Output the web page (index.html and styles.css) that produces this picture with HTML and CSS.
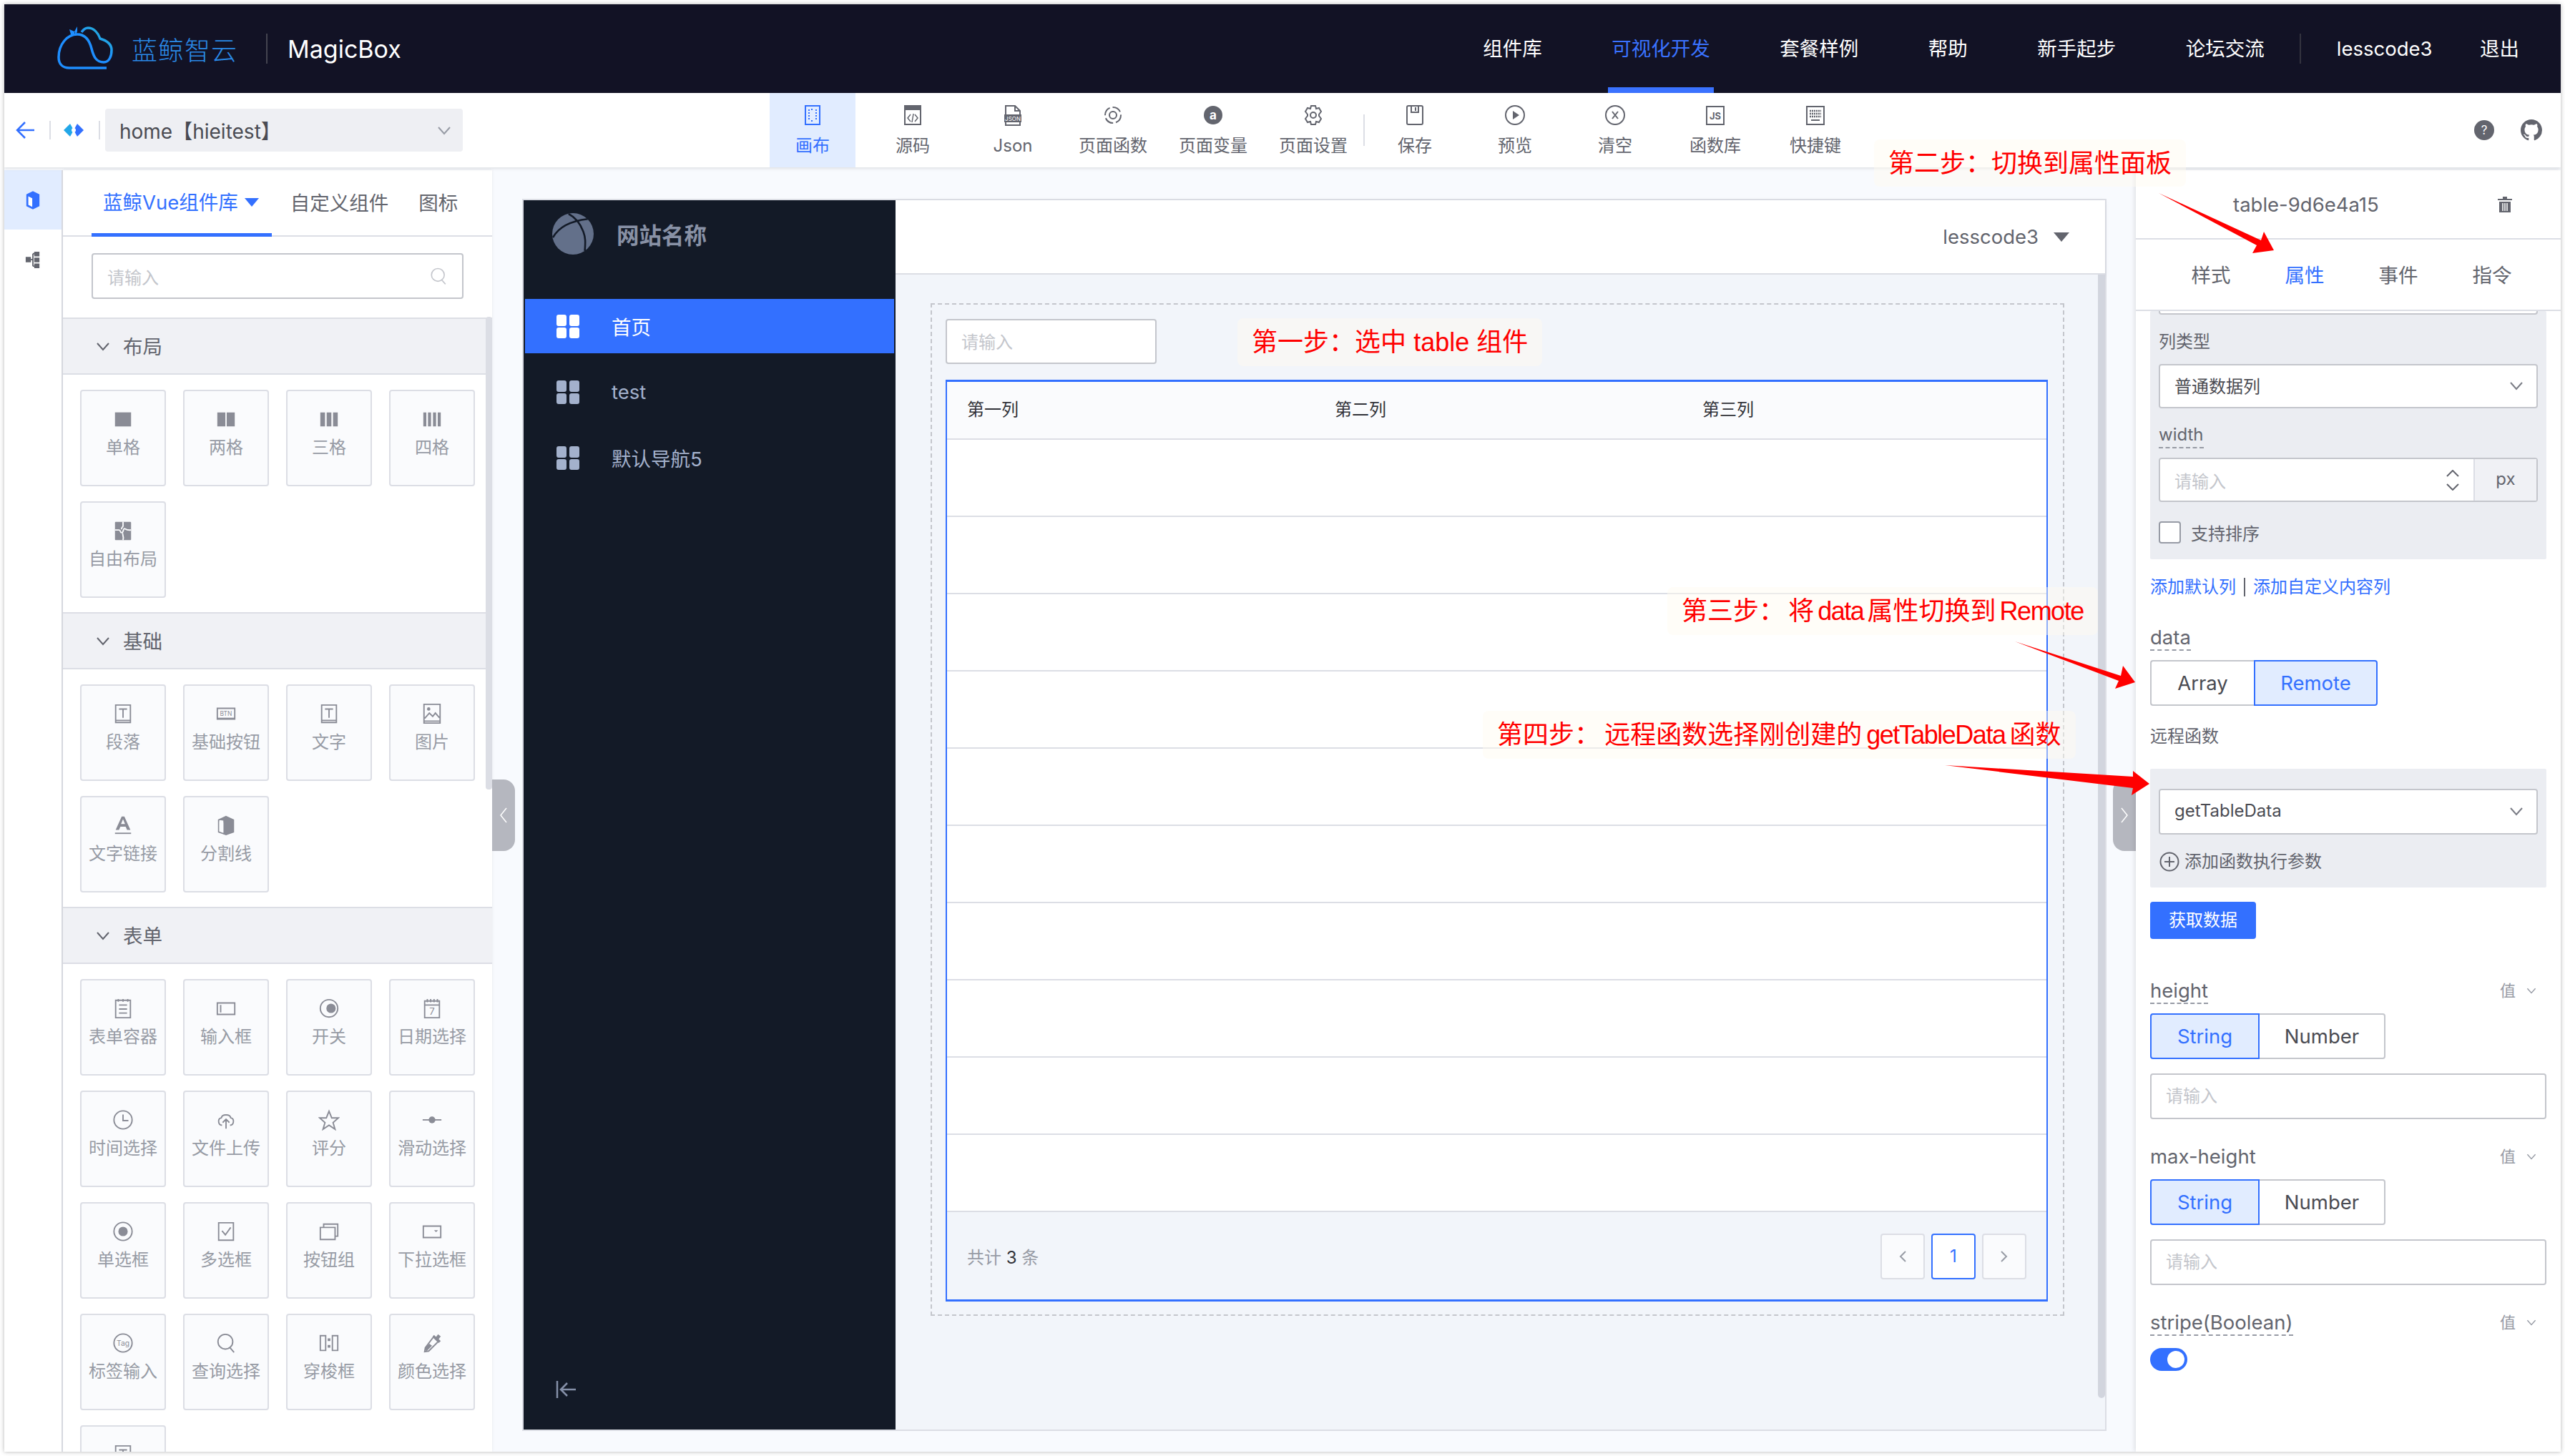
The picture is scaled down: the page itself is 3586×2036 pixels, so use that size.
FILE: index.html
```html
<!DOCTYPE html>
<html lang="zh-CN">
<head>
    <meta charset="UTF-8">
    <title>MagicBox</title>
    <link rel="stylesheet" href="styles.css">
</head>
<body>

<!-- shared icons -->
<svg class="icon-defs" xmlns="http://www.w3.org/2000/svg">
    <symbol id="i-down" viewBox="0 0 20 20"><path d="M2 6l8 9 8-9" fill="none" stroke="currentColor" stroke-width="2"/></symbol>
    <symbol id="i-one" viewBox="0 0 32 32"><rect x="4" y="6" width="24" height="21" fill="currentColor"/></symbol>
    <symbol id="i-two" viewBox="0 0 32 32"><path d="M3 6h12v21H3zM17 6h12v21H17z" fill="currentColor"/></symbol>
    <symbol id="i-three" viewBox="0 0 32 32"><path d="M3 6h7v21H3zM12.500 6h7v21h-7zM22 6h7v21h-7z" fill="currentColor"/></symbol>
    <symbol id="i-four" viewBox="0 0 32 32"><path d="M3 6h4.500v21H3zM10 6h4.500v21H10zM17.500 6H22v21h-4.500zM24.500 6H29v21h-4.500z" fill="currentColor"/></symbol>
    <symbol id="i-puzzle" viewBox="0 0 32 32"><rect x="4" y="3" width="24" height="27" rx="1" fill="currentColor"/><path d="M4 15h6c3 0 1 4 4 4s2-6 4-6 2 3 10 2M16 3v6c0 2-3 2-2 5M16 20c-2 2 2 4 0 10" fill="none" stroke="#fafbfd" stroke-width="2"/></symbol>
    <symbol id="i-para" viewBox="0 0 32 32"><path d="M5 3h22v26H5zM5 26h22M10 9h12M16 9v13" fill="none" stroke="currentColor" stroke-width="2"/></symbol>
    <symbol id="i-btn" viewBox="0 0 32 32"><path d="M3 8h26v16H3z" fill="none" stroke="currentColor" stroke-width="2"/><path d="M3 23h26" stroke="currentColor" stroke-width="2"/><text x="16" y="19" text-anchor="middle" font-size="9" fill="currentColor">BTN</text></symbol>
    <symbol id="i-pic" viewBox="0 0 32 32"><path d="M4 2h24v28H4zM4 27h24M5 23l7-8 5 5 4-5 6 7" fill="none" stroke="currentColor" stroke-width="2"/><circle cx="11" cy="9" r="2.500" fill="currentColor"/></symbol>
    <symbol id="i-link" viewBox="0 0 32 32"><path d="M5 23L14 3h4l9 20h-5l-2-5h-8l-2 5zM13 14h6l-3-7z" fill="currentColor" fill-rule="evenodd"/><path d="M4 28h24" stroke="currentColor" stroke-width="2"/></symbol>
    <symbol id="i-cube" viewBox="0 0 32 32"><path d="M16 3l11 5v18l-11 4-11-4V8z" fill="none" stroke="currentColor" stroke-width="2"/><path d="M16 3l11 5v18l-11 4-4-1V9l-7-1z" fill="currentColor"/><path d="M6 10l6 2v15l-6-2z" fill="#fafbfd"/></symbol>
    <symbol id="i-form" viewBox="0 0 32 32"><path d="M5 4h22v26H5zM10 11h12M10 17h12M10 23h12M9 2v4M16 2v4M23 2v4" fill="none" stroke="currentColor" stroke-width="2"/></symbol>
    <symbol id="i-input" viewBox="0 0 32 32"><path d="M3 8h26v17H3zM8 11v11" fill="none" stroke="currentColor" stroke-width="2"/></symbol>
    <symbol id="i-switch" viewBox="0 0 32 32"><circle cx="16" cy="16" r="13" fill="none" stroke="currentColor" stroke-width="2"/><circle cx="19" cy="16" r="7" fill="currentColor"/></symbol>
    <symbol id="i-date" viewBox="0 0 32 32"><path d="M5 5h22v25H5zM5 11h22M9 2v5M14 2v5M19 2v5M24 2v5" fill="none" stroke="currentColor" stroke-width="2"/><text x="16" y="26" text-anchor="middle" font-size="14" fill="currentColor">7</text></symbol>
    <symbol id="i-clock" viewBox="0 0 32 32"><circle cx="16" cy="16" r="13.500" fill="none" stroke="currentColor" stroke-width="2"/><path d="M16 8v9h8" fill="none" stroke="currentColor" stroke-width="2"/></symbol>
    <symbol id="i-upload" viewBox="0 0 32 32"><path d="M10 24C4 24 3 14 9 13c1-6 13-6 14 0 6 1 5 11-1 11M16 29V15M11 20l5-5 5 5" fill="none" stroke="currentColor" stroke-width="2"/></symbol>
    <symbol id="i-star" viewBox="0 0 32 32"><path d="M16 3l4 10h10l-8 7 3 10-9-6-9 6 3-10-8-7h10z" fill="none" stroke="currentColor" stroke-width="2"/></symbol>
    <symbol id="i-slider" viewBox="0 0 32 32"><path d="M2 16h28" stroke="currentColor" stroke-width="2"/><circle cx="16" cy="16" r="5" fill="currentColor"/></symbol>
    <symbol id="i-radio" viewBox="0 0 32 32"><circle cx="16" cy="16" r="13.500" fill="none" stroke="currentColor" stroke-width="2"/><circle cx="16" cy="16" r="7" fill="currentColor"/></symbol>
    <symbol id="i-check" viewBox="0 0 32 32"><path d="M5 3h22v26H5zM10 15l5 6 8-11" fill="none" stroke="currentColor" stroke-width="2"/></symbol>
    <symbol id="i-group" viewBox="0 0 32 32"><path d="M3 10h22v18H3zM8 10V5h21v18h-4" fill="none" stroke="currentColor" stroke-width="2"/></symbol>
    <symbol id="i-drop" viewBox="0 0 32 32"><path d="M3 8h26v17H3z" fill="none" stroke="currentColor" stroke-width="2"/><path d="M19 14h6l-3 3z" fill="currentColor"/></symbol>
    <symbol id="i-tag" viewBox="0 0 32 32"><circle cx="16" cy="16" r="13.500" fill="none" stroke="currentColor" stroke-width="2"/><text x="16" y="20" text-anchor="middle" font-size="11" fill="currentColor">Tag</text></symbol>
    <symbol id="i-search" viewBox="0 0 32 32"><circle cx="15" cy="14" r="11" fill="none" stroke="currentColor" stroke-width="2"/><path d="M22 23l6 7" stroke="currentColor" stroke-width="2"/></symbol>
    <symbol id="i-transfer" viewBox="0 0 32 32"><path d="M3 5h8v22H3zM21 5h8v22h-8z" fill="none" stroke="currentColor" stroke-width="2"/><path d="M14 9h4v4h-4zM14 19h4v4h-4z" fill="currentColor"/></symbol>
    <symbol id="i-dropper" viewBox="0 0 32 32"><path d="M18 7l7 7-14 14-6 1 1-6z" fill="none" stroke="currentColor" stroke-width="2"/><path d="M19 4l3 3 3-4 4 3-3 4 3 3-3 3L17 6zM6 23l6-6 4 3-9 9z" fill="currentColor"/></symbol>
    <symbol id="i-menu" viewBox="0 0 32 33"><path d="M3 0h8c2 0 3 1 3 3v10c0 2-1 3-3 3H3c-2 0-3-1-3-3V3c0-2 1-3 3-3zM21 0h8c2 0 3 1 3 3v10c0 2-1 3-3 3h-8c-2 0-3-1-3-3V3c0-2 1-3 3-3zM3 18h8c2 0 3 1 3 3v9c0 2-1 3-3 3H3c-2 0-3-1-3-3v-9c0-2 1-3 3-3zM21 18h8c2 0 3 1 3 3v9c0 2-1 3-3 3h-8c-2 0-3-1-3-3v-9c0-2 1-3 3-3z" fill="currentColor"/></symbol>
</svg>

<div class="window">

    <!-- top nav -->
    <header class="topbar">
        <svg class="cloud" viewBox="19 13 79 62" width="79" height="62">
            <defs>
                <linearGradient id="cloudGrad" x1="0" y1="1" x2="1" y2="0">
                    <stop offset="0" stop-color="#1e8eff"/>
                    <stop offset="0.6" stop-color="#1e8eff"/>
                    <stop offset="1" stop-color="#27bcc9"/>
                </linearGradient>
            </defs>
            <path d="M88 71H36C26 71 21 65 21 56 21 38 33 24 47 24 58 24 64 32 67 44 70 56 74 63 84 63 92 63 95 54 95 46 95 38 89 33 79 30 76 22 70 15 62 15 58 15 55 18 53 21" fill="none" stroke="url(#cloudGrad)" stroke-width="3.500"/>
            <path d="M36 17l7 3 0 6-5-2zM43 20l4-7 0 7-2 5z" fill="#1e8eff"/>
        </svg>
        <span class="brand-cn">蓝鲸智云</span>
        <span class="brand-sep"></span>
        <span class="brand-name">MagicBox</span>
        <nav class="topnav">
            <a>组件库</a>
            <a class="active">可视化开发</a>
            <a>套餐样例</a>
            <a>帮助</a>
            <a>新手起步</a>
            <a>论坛交流</a>
            <span class="nav-sep"></span>
            <a>lesscode3</a>
            <a class="logout">退出</a>
        </nav>
    </header>

    <!-- toolbar -->
    <div class="toolbar">
        <div class="page-switch">
            <svg class="back" viewBox="0 0 28 28" width="28" height="28"><path d="M26 14H3M13 3L2 14l11 11" fill="none" stroke="#3370ff" stroke-width="2.500"/></svg>
            <span class="bar-sep"></span>
            <svg class="mini-logo" viewBox="0 0 28 18" width="28" height="18"><path d="M9 0l5 9-5 9-9-9z" fill="#22a7e8"/><path d="M19 0l9 9-9 9-5-9z" fill="#3370ff"/><circle cx="14" cy="9" r="3" fill="#fff"/></svg>
            <span class="bar-sep"></span>
            <div class="page-select">
                <span>home【hieitest】</span>
                <svg width="20" height="20"><use href="#i-down"/></svg>
            </div>
        </div>
        <div class="tools">
            <div class="tool active">
                <svg viewBox="0 0 28 30" width="28" height="30"><path d="M4 2h20v26H4z" fill="none" stroke="currentColor" stroke-width="2"/><path d="M9 7v16M19 7v16M12 7h4M12 23h4" stroke="currentColor" stroke-width="2" stroke-dasharray="2 2"/></svg>
                <span>画布</span>
            </div>
            <div class="tool">
                <svg viewBox="0 0 28 30" width="28" height="30"><path d="M3 2h22v26H3z" fill="none" stroke="currentColor" stroke-width="2"/><path d="M3 2h22v6H3z" fill="currentColor"/><path d="M11 14l-4 5 4 5M17 14l4 5-4 5M15 13l-2 12" fill="none" stroke="currentColor" stroke-width="1.500"/></svg>
                <span>源码</span>
            </div>
            <div class="tool">
                <svg viewBox="0 0 28 30" width="28" height="30"><path d="M4 15V2h13l7 7v6M17 2v7h7M4 24v5h20v-5" fill="none" stroke="currentColor" stroke-width="2"/><rect x="2" y="14" width="24" height="11" fill="currentColor"/><text x="14" y="23" text-anchor="middle" font-size="8" fill="#fff">JSON</text></svg>
                <span>Json</span>
            </div>
            <div class="tool">
                <svg viewBox="0 0 28 30" width="28" height="30"><circle cx="14" cy="15" r="11" fill="none" stroke="currentColor" stroke-width="2" stroke-dasharray="13 4"/><circle cx="14" cy="15" r="5" fill="none" stroke="currentColor" stroke-width="2"/></svg>
                <span>页面函数</span>
            </div>
            <div class="tool">
                <svg viewBox="0 0 28 30" width="28" height="30"><circle cx="14" cy="15" r="13" fill="currentColor"/><text x="14" y="21" text-anchor="middle" font-size="17" font-weight="700" fill="#fff">a</text></svg>
                <span>页面变量</span>
            </div>
            <div class="tool">
                <svg viewBox="0 0 28 30" width="28" height="30"><path d="M11 2h6l1 4 4-1 3 5-3 4v2l3 4-3 5-4-1-1 4h-6l-1-4-4 1-3-5 3-4v-2l-3-4 3-5 4 1z" fill="none" stroke="currentColor" stroke-width="2"/><circle cx="14" cy="15" r="4" fill="none" stroke="currentColor" stroke-width="2"/></svg>
                <span>页面设置</span>
            </div>
            <span class="tool-sep"></span>
            <div class="tool">
                <svg viewBox="0 0 28 30" width="28" height="30"><rect x="3" y="2" width="22" height="26" rx="2" fill="none" stroke="currentColor" stroke-width="2"/><path d="M9 2v9h10V2M15 4v5" fill="none" stroke="currentColor" stroke-width="2"/></svg>
                <span>保存</span>
            </div>
            <div class="tool">
                <svg viewBox="0 0 28 30" width="28" height="30"><circle cx="14" cy="15" r="13" fill="none" stroke="currentColor" stroke-width="2"/><path d="M11 9l9 6-9 6z" fill="currentColor"/></svg>
                <span>预览</span>
            </div>
            <div class="tool">
                <svg viewBox="0 0 28 30" width="28" height="30"><circle cx="14" cy="15" r="13" fill="none" stroke="currentColor" stroke-width="2"/><path d="M10 10l8 10M18 10l-8 10" stroke="currentColor" stroke-width="2"/></svg>
                <span>清空</span>
            </div>
            <div class="tool">
                <svg viewBox="0 0 28 30" width="28" height="30"><path d="M2 3h24v25H2z" fill="none" stroke="currentColor" stroke-width="2"/><text x="14" y="21" text-anchor="middle" font-size="13" font-weight="700" fill="currentColor">JS</text></svg>
                <span>函数库</span>
            </div>
            <div class="tool">
                <svg viewBox="0 0 28 30" width="28" height="30"><path d="M2 3h24v25H2z" fill="none" stroke="currentColor" stroke-width="2"/><path d="M6 9h16M6 13h16M6 17h16" stroke="currentColor" stroke-width="2.500" stroke-dasharray="2 1"/><path d="M8 22h12" stroke="currentColor" stroke-width="2"/></svg>
                <span>快捷键</span>
            </div>
        </div>
        <div class="bar-right">
            <svg viewBox="0 0 28 28" width="28" height="28"><circle cx="14" cy="14" r="14" fill="#63656e"/><text x="14" y="20" text-anchor="middle" font-size="17" fill="#fff">?</text></svg>
            <svg viewBox="0 0 16 16" width="30" height="30"><path fill="#63656e" d="M8 0C3.580 0 0 3.580 0 8c0 3.540 2.290 6.530 5.470 7.590.4.070.55-.17.55-.38 0-.19-.01-.82-.01-1.490-2.010.37-2.530-.49-2.690-.94-.09-.23-.48-.94-.82-1.130-.28-.15-.68-.52-.01-.53.630-.01 1.080.58 1.230.82.720 1.210 1.870.87 2.330.66.070-.52.280-.87.510-1.070-1.780-.2-3.640-.89-3.640-3.950 0-.87.310-1.590.82-2.150-.08-.2-.36-1.020.08-2.120 0 0 .67-.21 2.200.82.640-.18 1.320-.27 2-.27s1.360.09 2 .27c1.530-1.040 2.200-.82 2.200-.82.440 1.100.16 1.920.08 2.120.51.560.82 1.270.82 2.150 0 3.070-1.870 3.750-3.650 3.950.290.250.54.730.54 1.480 0 1.070-.01 1.930-.01 2.200 0 .21.150.46.550.38A8.010 8.010 0 0 0 16 8c0-4.420-3.580-8-8-8z"/></svg>
        </div>
    </div>

    <div class="workspace">

        <!-- left icon rail -->
        <aside class="rail">
            <div class="rail-item active">
                <svg viewBox="0 0 24 30" width="22" height="28"><path d="M12 1l10 5v18l-10 5-10-5V6z" fill="#3370ff"/><path d="M5 9l6 3v13l-6-3z" fill="#fff"/></svg>
            </div>
            <div class="rail-item">
                <svg viewBox="0 0 24 30" width="22" height="28"><path d="M1 11h8v8H1zM14 3h8v7h-8zM14 12h8v7h-8zM14 21h8v7h-8z" fill="#63656e"/><path d="M9 15h3M12 6v19M12 6h3M12 25h3" stroke="#63656e" stroke-width="2" fill="none"/></svg>
            </div>
        </aside>

        <!-- component library -->
        <aside class="lib">
            <div class="lib-tabs">
                <div class="lib-tab active">蓝鲸Vue组件库<i class="caret"></i></div>
                <div class="lib-tab">自定义组件</div>
                <div class="lib-tab">图标</div>
            </div>
            <div class="lib-search">
                <span>请输入</span>
                <svg viewBox="0 0 32 32" width="26" height="28"><use href="#i-search"/></svg>
            </div>

            <section class="group-head"><svg width="20" height="20"><use href="#i-down"/></svg><span>布局</span></section>
            <div class="comp-grid">
                <div class="comp"><svg><use href="#i-one"/></svg><span>单格</span></div>
                <div class="comp"><svg><use href="#i-two"/></svg><span>两格</span></div>
                <div class="comp"><svg><use href="#i-three"/></svg><span>三格</span></div>
                <div class="comp"><svg><use href="#i-four"/></svg><span>四格</span></div>
                <div class="comp"><svg><use href="#i-puzzle"/></svg><span>自由布局</span></div>
            </div>

            <section class="group-head"><svg width="20" height="20"><use href="#i-down"/></svg><span>基础</span></section>
            <div class="comp-grid">
                <div class="comp"><svg><use href="#i-para"/></svg><span>段落</span></div>
                <div class="comp"><svg><use href="#i-btn"/></svg><span>基础按钮</span></div>
                <div class="comp"><svg><use href="#i-para"/></svg><span>文字</span></div>
                <div class="comp"><svg><use href="#i-pic"/></svg><span>图片</span></div>
                <div class="comp"><svg><use href="#i-link"/></svg><span>文字链接</span></div>
                <div class="comp"><svg><use href="#i-cube"/></svg><span>分割线</span></div>
            </div>

            <section class="group-head"><svg width="20" height="20"><use href="#i-down"/></svg><span>表单</span></section>
            <div class="comp-grid">
                <div class="comp"><svg><use href="#i-form"/></svg><span>表单容器</span></div>
                <div class="comp"><svg><use href="#i-input"/></svg><span>输入框</span></div>
                <div class="comp"><svg><use href="#i-switch"/></svg><span>开关</span></div>
                <div class="comp"><svg><use href="#i-date"/></svg><span>日期选择</span></div>
                <div class="comp"><svg><use href="#i-clock"/></svg><span>时间选择</span></div>
                <div class="comp"><svg><use href="#i-upload"/></svg><span>文件上传</span></div>
                <div class="comp"><svg><use href="#i-star"/></svg><span>评分</span></div>
                <div class="comp"><svg><use href="#i-slider"/></svg><span>滑动选择</span></div>
                <div class="comp"><svg><use href="#i-radio"/></svg><span>单选框</span></div>
                <div class="comp"><svg><use href="#i-check"/></svg><span>多选框</span></div>
                <div class="comp"><svg><use href="#i-group"/></svg><span>按钮组</span></div>
                <div class="comp"><svg><use href="#i-drop"/></svg><span>下拉选框</span></div>
                <div class="comp"><svg><use href="#i-tag"/></svg><span>标签输入</span></div>
                <div class="comp"><svg><use href="#i-search"/></svg><span>查询选择</span></div>
                <div class="comp"><svg><use href="#i-transfer"/></svg><span>穿梭框</span></div>
                <div class="comp"><svg><use href="#i-dropper"/></svg><span>颜色选择</span></div>
                <div class="comp"><svg><use href="#i-para"/></svg></div>
            </div>
            <div class="lib-scroll"></div>
        </aside>

        <!-- canvas -->
        <main class="canvas">
            <div class="handle handle-left"><svg viewBox="0 0 12 24" width="12" height="24"><path d="M10 2L2 12l8 10" fill="none" stroke="#fff" stroke-width="1.500"/></svg></div>
            <div class="handle handle-right"><svg viewBox="0 0 12 24" width="12" height="24"><path d="M2 2l8 10-8 10" fill="none" stroke="#fff" stroke-width="1.500"/></svg></div>

            <div class="preview">
                <div class="side">
                    <div class="side-logo">
                        <svg viewBox="12 12 56 56" width="58" height="58">
                            <circle cx="40" cy="40" r="28" fill="#63708a"/>
                            <path d="M13 45C20 32 34 23 60 20M34 13c6 3 14 8 20 24 3 8 3 14 2 26" fill="none" stroke="#131a27" stroke-width="2.500"/>
                        </svg>
                        <span>网站名称</span>
                    </div>
                    <div class="side-item active"><svg width="32" height="33"><use href="#i-menu"/></svg>首页</div>
                    <div class="side-item"><svg width="32" height="33"><use href="#i-menu"/></svg>test</div>
                    <div class="side-item"><svg width="32" height="33"><use href="#i-menu"/></svg>默认导航5</div>
                    <svg class="side-fold" viewBox="0 0 30 26" width="30" height="26"><path d="M2 1v24M28 13H8M16 4l-9 9 9 9" fill="none" stroke="#8590a8" stroke-width="2.500"/></svg>
                </div>
                <div class="page">
                    <div class="page-head">
                        <span>lesscode3</span><i class="caret dark"></i>
                    </div>
                    <div class="page-body">
                        <div class="dash">
                            <div class="fake-input">请输入</div>
                            <div class="tbl">
                                <div class="tbl-head">
                                    <span>第一列</span><span>第二列</span><span>第三列</span>
                                </div>
                                <div class="tbl-row"></div>
                                <div class="tbl-row"></div>
                                <div class="tbl-row"></div>
                                <div class="tbl-row"></div>
                                <div class="tbl-row"></div>
                                <div class="tbl-row"></div>
                                <div class="tbl-row"></div>
                                <div class="tbl-row"></div>
                                <div class="tbl-row"></div>
                                <div class="tbl-row"></div>
                                <div class="tbl-foot">
                                    <span class="total">共计 <b>3</b> 条</span>
                                    <div class="pager">
                                        <span class="pg"><svg viewBox="0 0 12 20" width="12" height="20"><path d="M10 3L3 10l7 7" fill="none" stroke="#979ba5" stroke-width="2"/></svg></span>
                                        <span class="pg current">1</span>
                                        <span class="pg"><svg viewBox="0 0 12 20" width="12" height="20"><path d="M2 3l7 7-7 7" fill="none" stroke="#979ba5" stroke-width="2"/></svg></span>
                                    </div>
                                </div>
                            </div>
                        </div>
                        <div class="page-scroll"></div>
                    </div>
                </div>
            </div>
        </main>

        <!-- property panel -->
        <aside class="props">
            <div class="props-head">
                <span>table-9d6e4a15</span>
                <svg viewBox="0 0 22 22" width="22" height="22"><path d="M1 5h20V3H14V0H8v3H1zM3 7h16v15H3z" fill="#63656e"/><path d="M8 9v11M11 9v11M14 9v11" stroke="#fff" stroke-width="1.500"/></svg>
            </div>
            <div class="props-tabs">
                <span>样式</span><span class="active">属性</span><span>事件</span><span>指令</span>
            </div>
            <div class="props-body">
                <div class="block block-top">
                    <div class="cut-input"></div>
                    <div class="label-sm top-22">列类型</div>
                    <div class="select">普通数据列<svg width="20" height="20"><use href="#i-down"/></svg></div>
                    <div class="label-row mt-21"><span class="label-sm dashed">width</span></div>
                    <div class="num-input">
                        <span class="ph">请输入</span>
                        <span class="spin">
                            <svg viewBox="0 0 18 10" width="18" height="10"><path d="M1 9l8-8 8 8" fill="none" stroke="#63656e" stroke-width="2"/></svg>
                            <svg viewBox="0 0 18 10" width="18" height="10"><path d="M1 1l8 8 8-8" fill="none" stroke="#63656e" stroke-width="2"/></svg>
                        </span>
                        <span class="unit">px</span>
                    </div>
                    <label class="check-row"><i class="check"></i>支持排序</label>
                </div>

                <div class="links"><a>添加默认列</a><b></b><a>添加自定义内容列</a></div>

                <div class="label-row mt-38"><span class="label dashed">data</span></div>
                <div class="seg seg-data"><span>Array</span><span class="on">Remote</span></div>

                <div class="label-sm label-block mt-27">远程函数</div>
                <div class="block block-remote">
                    <div class="select tall">getTableData<svg width="20" height="20"><use href="#i-down"/></svg></div>
                    <div class="add-param">
                        <svg viewBox="0 0 28 28" width="28" height="28"><circle cx="14" cy="14" r="12.500" fill="none" stroke="#63656e" stroke-width="2"/><path d="M14 7v14M7 14h14" stroke="#63656e" stroke-width="2"/></svg>
                        添加函数执行参数
                    </div>
                </div>
                <div class="primary-btn">获取数据</div>

                <div class="field-head mt-56">
                    <span class="label dashed">height</span>
                    <span class="val">值<svg width="14" height="14"><use href="#i-down"/></svg></span>
                </div>
                <div class="seg"><span class="on">String</span><span>Number</span></div>
                <div class="text-input">请输入</div>

                <div class="field-head mt-36">
                    <span class="label plain">max-height</span>
                    <span class="val">值<svg width="14" height="14"><use href="#i-down"/></svg></span>
                </div>
                <div class="seg"><span class="on">String</span><span>Number</span></div>
                <div class="text-input">请输入</div>

                <div class="field-head mt-36">
                    <span class="label dashed">stripe(Boolean)</span>
                    <span class="val">值<svg width="14" height="14"><use href="#i-down"/></svg></span>
                </div>
                <div class="toggle"><i></i></div>
            </div>
        </aside>
    </div>

    <!-- tutorial annotations -->
    <div class="note note-1">第一步：选中 <em>table</em> 组件</div>
    <div class="note note-2">第二步：切换到属性面板</div>
    <div class="note note-3">第三步： 将 <em>data</em> 属性切换到 <em>Remote</em></div>
    <div class="note note-4">第四步： 远程函数选择刚创建的 <em>getTableData</em> 函数</div>
    <svg class="arrows" viewBox="6 6 3574 2024" width="3574" height="2024">
        <path d="M3018 270L3161 336 3165 324 3179 350 3149 354 3155 343z" fill="#ff0000"/>
        <path d="M2817 897L2965 945 2968 931 2985 954 2957 963 2962 952z" fill="#ff0000"/>
        <path d="M2719 1070L2982 1086 2982 1078 3005 1096 2980 1112 2982 1102z" fill="#ff0000"/>
    </svg>
</div>

</body>
</html>
```

FILE: styles.css
```css
* {
    box-sizing: border-box;
}

html, body {
    margin: 0;
    padding: 0;
    background: #fff;
}

body {
    padding: 6px;
    font-family: Inter, "Noto Sans CJK SC", sans-serif;
    font-size: 24px;
    color: #63656e;
}

.icon-defs {
    display: none;
}

.window {
    position: relative;
    width: 3574px;
    height: 2024px;
    overflow: hidden;
    background: #f8fafe;
    box-shadow: 0 0 6px rgba(0, 0, 0, .3);
}

/* top nav */
.topbar {
    display: flex;
    align-items: center;
    height: 124px;
    padding-left: 74px;
    background: #121225;
    color: #fff;
}

.brand-cn {
    margin-left: 25px;
    font-size: 36px;
    font-weight: 300;
    letter-spacing: 1px;
    color: #2a8ae8;
}

.brand-sep {
    width: 2px;
    height: 42px;
    margin: 0 28px 0 40px;
    background: #44444f;
}

.brand-name {
    font-size: 34px;
}

.topnav {
    display: flex;
    align-items: center;
    gap: 97.5px;
    height: 100%;
    margin-left: auto;
    padding-right: 58px;
    font-size: 27.5px;
}

.topnav a {
    position: relative;
    line-height: 124px;
}

.topnav a.active {
    color: #3a72ff;
}

.topnav a.active::after {
    content: "";
    position: absolute;
    left: -5px;
    right: -5px;
    bottom: 0;
    height: 8px;
    background: #3a72ff;
}

.nav-sep {
    width: 2px;
    height: 42px;
    margin: 0 -48px;
    background: #33333f;
}

.topnav .logout {
    margin-left: -31px;
}

/* toolbar */
.toolbar {
    display: flex;
    height: 104px;
    background: #fff;
    box-shadow: 0 2px 4px rgba(0, 0, 0, .1);
    position: relative;
    z-index: 2;
}

.page-switch {
    display: flex;
    align-items: center;
    width: 1070px;
    padding-left: 16px;
}

.bar-sep {
    width: 2px;
    height: 26px;
    margin: 0 18px 0 19px;
    background: #dcdee5;
}

.page-switch .bar-sep:nth-of-type(2) {
    margin: 0 7px 0 21px;
}

.page-select {
    display: flex;
    align-items: center;
    justify-content: space-between;
    width: 500px;
    height: 60px;
    padding: 0 16px 0 20px;
    border-radius: 4px;
    background: #eeeff3;
    font-size: 28px;
    color: #4a4b52;
}

.page-select svg {
    color: #979ba5;
}

.tools {
    display: flex;
}

.tool {
    display: flex;
    flex-direction: column;
    align-items: center;
    width: 120px;
    height: 104px;
    margin-right: 20px;
    padding-top: 16px;
    color: #63656e;
}

.tool span {
    margin-top: 13px;
    line-height: 30px;
    white-space: nowrap;
}

.tool.active {
    background: #e1ecff;
    color: #3370ff;
}

.tool-sep {
    width: 2px;
    height: 44px;
    margin: 30px 10px 0 -10px;
    background: #dcdee5;
}

.bar-right {
    display: flex;
    align-items: center;
    gap: 37px;
    margin-left: auto;
    padding-right: 26px;
}

/* workspace */
.workspace {
    position: relative;
    display: flex;
    height: 1792px;
    margin-top: 4px;
}

.rail {
    width: 82px;
    flex: none;
    background: #fff;
    border-right: 2px solid #dcdee5;
}

.rail-item {
    display: flex;
    align-items: center;
    justify-content: center;
    height: 83px;
}

.rail-item.active {
    background: #e1ecff;
}

/* component library */
.lib {
    position: relative;
    width: 600px;
    flex: none;
    overflow: hidden;
    background: #fff;
    box-shadow: 0 0 4px rgba(0, 0, 0, .08);
}

.lib-tabs {
    display: flex;
    height: 93px;
    padding-left: 40px;
    border-bottom: 2px solid #dcdee5;
    font-size: 27.5px;
    line-height: 93px;
}

.lib-tab {
    padding: 0 21px;
    white-space: nowrap;
}

.lib-tab.active {
    display: flex;
    align-items: center;
    height: 93px;
    margin-right: 5px;
    padding: 2px 18px 0 16px;
    border-bottom: 5px solid #3370ff;
    color: #3370ff;
}

.caret {
    display: inline-block;
    width: 0;
    height: 0;
    margin-left: 9px;
    border-left: 10px solid transparent;
    border-right: 10px solid transparent;
    border-top: 12px solid #3370ff;
}

.caret.dark {
    margin-left: 21px;
    border-left-width: 11px;
    border-right-width: 11px;
    border-top: 13px solid #63656e;
}

.lib-search {
    display: flex;
    align-items: center;
    justify-content: space-between;
    width: 520px;
    height: 64px;
    margin: 23px 40px 26px;
    padding: 0 20px;
    border: 2px solid #c4c6cc;
    border-radius: 4px;
    color: #c4c6cc;
}

.group-head {
    display: flex;
    align-items: center;
    gap: 18px;
    height: 80px;
    padding-left: 46px;
    background: #f0f1f5;
    border-top: 2px solid #dcdee5;
    border-bottom: 2px solid #dcdee5;
    font-size: 27.5px;
}

.group-head span {
    margin-top: -3px;
}

.group-head svg {
    color: #63656e;
}

.comp-grid {
    display: grid;
    grid-template-columns: repeat(4, 120px);
    gap: 21px 24px;
    padding: 21px 0 20px 24px;
}

.comp {
    display: flex;
    flex-direction: column;
    align-items: center;
    height: 135px;
    padding-top: 24px;
    border: 2px solid #dcdee5;
    border-radius: 4px;
    background: #fafbfd;
    color: #979ba5;
}

.comp svg {
    width: 30px;
    height: 30px;
    color: #8a8c96;
}

.comp span {
    margin-top: 9px;
    line-height: 32px;
    white-space: nowrap;
}

.lib-scroll {
    position: absolute;
    top: 205px;
    right: 0;
    width: 9px;
    height: 661px;
    border-radius: 4px;
    background: #dcdee5;
}

/* canvas */
.canvas {
    position: relative;
    flex: 1;
    padding: 40px 41px 29px 42px;
}

.handle {
    position: absolute;
    top: 852px;
    display: flex;
    align-items: center;
    justify-content: center;
    width: 32px;
    height: 100px;
    background: #b5b7bf;
}

.handle-left {
    left: 0;
    border-radius: 0 16px 16px 0;
}

.handle-right {
    right: 0;
    border-radius: 16px 0 0 16px;
}

.preview {
    display: flex;
    height: 100%;
    border: 2px solid #dcdee5;
    background: #fff;
}

.side {
    position: relative;
    width: 520px;
    flex: none;
    background: #131a27;
    color: #a3b1cc;
    font-size: 27.5px;
}

.side-logo {
    display: flex;
    align-items: center;
    gap: 32px;
    height: 138px;
    padding: 0 0 44px 40px;
    font-size: 31.5px;
    font-weight: 700;
    color: #8891a5;
}

.side-item {
    display: flex;
    align-items: center;
    gap: 45px;
    height: 76px;
    margin: 0 2px 16px;
    padding-left: 44px;
}

.side-item.active {
    background: #3370ff;
    color: #fff;
}

.side-fold {
    position: absolute;
    left: 45px;
    bottom: 43px;
}

.page {
    display: flex;
    flex-direction: column;
    flex: 1;
    min-width: 0;
}

.page-head {
    display: flex;
    align-items: center;
    justify-content: flex-end;
    height: 104px;
    padding-right: 50px;
    border-bottom: 2px solid #dcdee5;
    box-shadow: 0 2px 8px rgba(0, 0, 0, .05);
    font-size: 27.5px;
}

.page-body {
    position: relative;
    flex: 1;
    padding: 40px 0 0 49px;
    background: #f2f5fa;
}

.page-scroll {
    position: absolute;
    top: 0;
    right: 0;
    width: 10px;
    height: 1571px;
    border-radius: 0 0 5px 5px;
    background: #d2d5de;
}

.dash {
    width: 1585px;
    height: 1416px;
    padding: 20px 19px;
    border: 2px dashed #c4c6cc;
}

.fake-input {
    width: 295px;
    height: 63px;
    padding-left: 20px;
    border: 2px solid #c4c6cc;
    border-radius: 4px;
    background: #fff;
    color: #c4c6cc;
    line-height: 62px;
}

.tbl {
    width: 1541px;
    height: 1289px;
    margin-top: 22px;
    border: 2px solid #3370ff;
    border-top-width: 3px;
    border-bottom-width: 3px;
}

.tbl-head {
    display: grid;
    grid-template-columns: repeat(3, 514px);
    align-items: center;
    height: 81px;
    padding: 0 0 7px 28px;
    background: #fafbfd;
    border-bottom: 2px solid #dcdee5;
    color: #313238;
}

.tbl-row {
    height: 108px;
    background: #fff;
    border-bottom: 2px solid #dcdee5;
}

.tbl-foot {
    display: flex;
    align-items: center;
    justify-content: space-between;
    height: 123px;
    padding: 0 28px;
    color: #979ba5;
}

.total b {
    font-weight: 400;
    color: #313238;
}

.pager {
    display: flex;
    gap: 9px;
}

.pg {
    display: flex;
    align-items: center;
    justify-content: center;
    width: 62px;
    height: 64px;
    border: 2px solid #dcdee5;
    border-radius: 4px;
    background: #fafbfd;
}

.pg.current {
    border-color: #3370ff;
    background: #fff;
    color: #3370ff;
}

/* property panel */
.props {
    width: 594px;
    flex: none;
    background: #fff;
    box-shadow: -2px 0 6px rgba(0, 0, 0, .1);
    z-index: 1;
}

.props-head {
    display: flex;
    align-items: center;
    justify-content: space-between;
    height: 97px;
    padding: 0 67px 0 136px;
    border-bottom: 2px solid #dcdee5;
    font-size: 27.5px;
}

.props-tabs {
    display: flex;
    justify-content: center;
    align-items: center;
    gap: 76px;
    height: 100px;
    padding: 0 0 2px 9px;
    border-bottom: 2px solid #dcdee5;
    font-size: 27.5px;
}

.props-tabs .active {
    color: #3370ff;
}

.props-body {
    padding: 0 20px;
}

.block {
    padding: 0 12px;
    border-radius: 2px;
    background: #ebedf2;
}

.block-top {
    height: 347px;
}

.cut-input {
    height: 5px;
    background: #fff;
    border: 2px solid #c4c6cc;
    border-top: 0;
    border-radius: 0 0 4px 4px;
}

.label-sm {
    display: inline-block;
    line-height: 32px;
}

.label-block {
    display: block;
}

.top-22 {
    display: block;
    margin-top: 22px;
}

.label-row {
    display: flex;
}

.select {
    display: flex;
    align-items: center;
    justify-content: space-between;
    height: 62px;
    margin-top: 15px;
    padding: 0 18px 3px 20px;
    border: 2px solid #c4c6cc;
    border-radius: 4px;
    background: #fff;
    color: #4a4b52;
}

.select svg {
    color: #7a7c85;
}

.select.tall {
    height: 64px;
    margin-top: 0;
}

.dashed {
    padding-bottom: 1px;
    border-bottom: 2px dashed #979ba5;
}

.mt-21 {
    margin-top: 21px;
}

.mt-27 {
    margin-top: 27px;
}

.mt-36 {
    margin-top: 36px;
}

.mt-38 {
    margin-top: 38px;
}

.mt-56 {
    margin-top: 56px;
}

.num-input {
    display: flex;
    align-items: center;
    height: 62px;
    margin-top: 13px;
    border: 2px solid #c4c6cc;
    border-radius: 4px;
    background: #fff;
}

.ph {
    flex: 1;
    padding-left: 20px;
    color: #c4c6cc;
}

.spin {
    display: flex;
    flex-direction: column;
    gap: 9px;
    margin-right: 20px;
}

.spin svg {
    display: block;
}

.unit {
    width: 88px;
    height: 100%;
    background: #f0f1f5;
    border-left: 2px solid #dcdee5;
    text-align: center;
    line-height: 56px;
}

.check-row {
    display: flex;
    align-items: center;
    gap: 14px;
    margin-top: 25px;
}

.check {
    width: 31px;
    height: 31px;
    border: 2px solid #979ba5;
    border-radius: 4px;
    background: #fff;
}

.links {
    display: flex;
    align-items: center;
    margin-top: 23px;
    line-height: 32px;
    color: #3370ff;
}

.links b {
    width: 2px;
    height: 26px;
    margin: 0 11px;
    background: #63656e;
}

.label {
    display: inline-block;
    font-size: 27.5px;
    line-height: 32px;
}

.label.plain {
    border-bottom: 3px solid transparent;
}

.seg {
    display: inline-flex;
    height: 64px;
    margin-top: 13px;
    font-size: 27.5px;
    vertical-align: top;
}

.seg span {
    display: flex;
    align-items: center;
    justify-content: center;
    width: 176px;
    border: 2px solid #c4c6cc;
    border-left-width: 0;
    border-radius: 0 4px 4px 0;
    background: #fff;
    color: #4a4b52;
}

.seg span.on {
    width: 153px;
    border: 2px solid #3370ff;
    border-radius: 4px 0 0 4px;
    background: #e1ecff;
    color: #3370ff;
}

.seg-data {
    display: flex;
}

.seg-data span {
    width: 145px;
    border-left-width: 2px;
    border-right-width: 0;
    border-radius: 4px 0 0 4px;
}

.seg-data span.on {
    width: 173px;
    border-radius: 0 4px 4px 0;
}

.block-remote {
    height: 166px;
    margin-top: 29px;
    padding-top: 28px;
}

.add-param {
    display: flex;
    align-items: center;
    gap: 7px;
    margin-top: 22px;
    line-height: 32px;
    margin-left: 1px;
}

.primary-btn {
    width: 148px;
    height: 52px;
    margin-top: 20px;
    border-radius: 4px;
    background: #3370ff;
    color: #fff;
    text-align: center;
    line-height: 52px;
}

.field-head {
    display: flex;
    align-items: flex-start;
    justify-content: space-between;
}

.val {
    display: flex;
    align-items: center;
    gap: 15px;
    padding: 0 14px 0 0;
    font-size: 22px;
    line-height: 32px;
    color: #979ba5;
}

.text-input {
    height: 64px;
    margin-top: 20px;
    padding-left: 20px;
    border: 2px solid #c4c6cc;
    border-radius: 4px;
    background: #fff;
    color: #c4c6cc;
    line-height: 60px;
}

.toggle {
    position: relative;
    width: 52px;
    height: 32px;
    margin-top: 17px;
    border-radius: 16px;
    background: #3370ff;
}

.toggle i {
    position: absolute;
    top: 4px;
    right: 4px;
    width: 24px;
    height: 24px;
    border-radius: 50%;
    background: #fff;
}

/* tutorial annotations */
.note {
    position: absolute;
    padding: 6px 20px;
    border-radius: 8px;
    background: rgba(255, 250, 240, .45);
    color: #ff0000;
    font-size: 36px;
    line-height: 54px;
    white-space: nowrap;
    z-index: 5;
}

.note em {
    font-family: "Liberation Sans", sans-serif;
    font-style: normal;
    letter-spacing: -1.5px;
}

.note-1 {
    left: 1724px;
    top: 439px;
}

.note-1 em {
    letter-spacing: 0;
}

.note-2 {
    left: 2614px;
    top: 189px;
}

.note-3 {
    left: 2325px;
    top: 815px;
    word-spacing: -5px;
}

.note-4 {
    left: 2067px;
    top: 988px;
    word-spacing: -4px;
}

.arrows {
    position: absolute;
    top: 0;
    left: 0;
    z-index: 6;
    pointer-events: none;
}
```
